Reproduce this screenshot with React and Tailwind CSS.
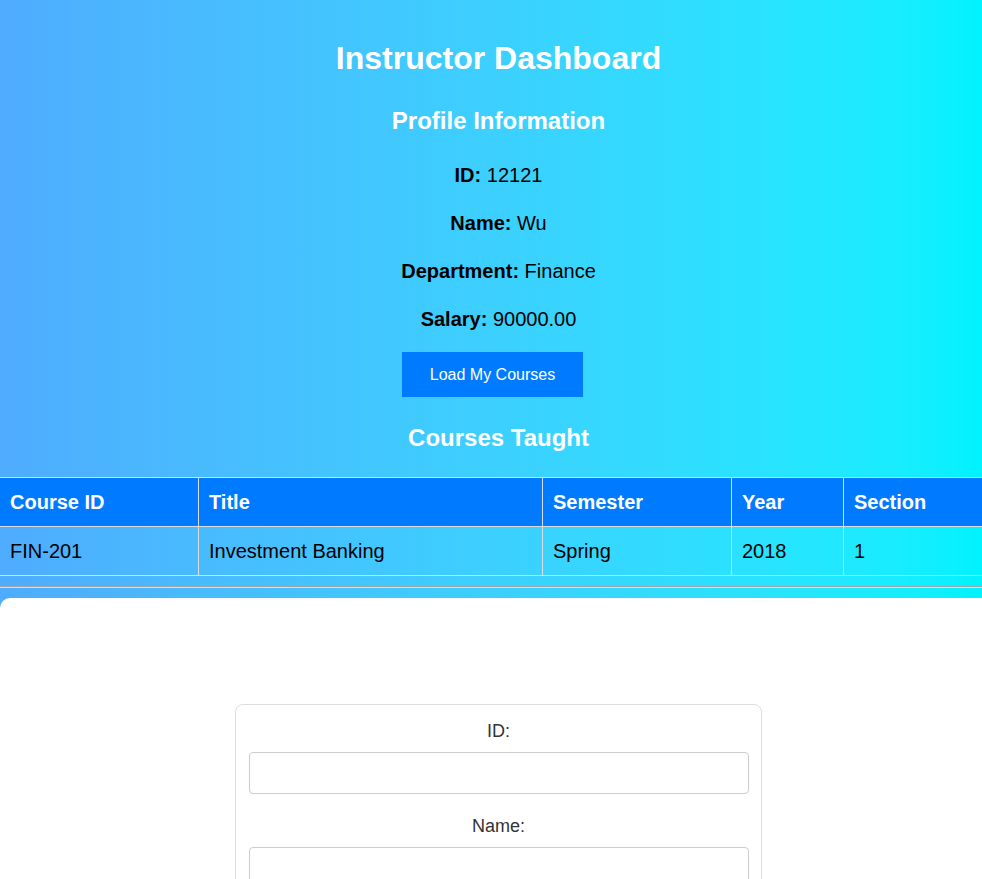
import { useState } from 'react';

const PROFILE = [
  { label: 'ID', value: '12121' },
  { label: 'Name', value: 'Wu' },
  { label: 'Department', value: 'Finance' },
  { label: 'Salary', value: '90000.00' },
];

const COLUMNS = [
  { key: 'id', label: 'Course ID', width: 'w-[199px]' },
  { key: 'title', label: 'Title', width: 'w-[344px]' },
  { key: 'semester', label: 'Semester', width: 'w-[189px]' },
  { key: 'year', label: 'Year', width: 'w-[112px]' },
  { key: 'section', label: 'Section', width: '' },
];

const COURSES = [
  { id: 'FIN-201', title: 'Investment Banking', semester: 'Spring', year: '2018', section: '1' },
];

// only the fields that fit in the window
const FIELDS = ['ID', 'Name'];

export default function App() {
  const [form, setForm] = useState({});

  return (
    <div className="h-[879px] w-full overflow-hidden bg-gradient-to-r from-[#4facfe] to-[#00f2fe] font-['Comic_Sans_MS','Liberation_Sans',sans-serif]">
      <div className="w-[997px]">
        {/* PROFILE */}
        <div className="flex flex-col items-center pt-[36px] text-center">
          <h1 className="text-[32px] leading-[44px] font-bold text-white">Instructor Dashboard</h1>
          <h2 className="mt-[24px] text-[24px] leading-[34px] font-bold text-white">Profile Information</h2>
          <div className="mt-[23px] flex flex-col gap-[20px]">
            {PROFILE.map(p => (
              <p key={p.label} className="text-[20px] leading-[28px] text-black">
                <strong>{p.label}:</strong> {p.value}
              </p>
            ))}
          </div>
          <div className="mt-[19px] flex w-full justify-center pr-[12px]">
            <button className="flex h-[45px] w-[181px] items-center justify-center bg-[#007bff] font-['Liberation_Sans',Arial,sans-serif] text-[16px] text-white">
              Load My Courses
            </button>
          </div>
          <h2 className="mt-[24px] text-[24px] leading-[34px] font-bold text-white">Courses Taught</h2>
        </div>

        {/* COURSES */}
        <table className="mt-[22px] -ml-px w-[998px] border-collapse text-left text-[20px] leading-[28px]">
          <thead>
            <tr className="bg-[#007bff] text-white">
              {COLUMNS.map(c => (
                <th key={c.key} className={`border border-[#ddd] px-[10px] py-[10px] font-bold ${c.width}`}>{c.label}</th>
              ))}
            </tr>
          </thead>
          <tbody>
            {COURSES.map(row => (
              <tr key={row.id} className="text-black">
                {COLUMNS.map(c => (
                  <td key={c.key} className="border border-[#ddd] px-[10px] py-[10px]">{row[c.key]}</td>
                ))}
              </tr>
            ))}
          </tbody>
        </table>

        <div className="mt-[10px] border-t border-b border-t-[#a3a3a3] border-b-[#dcdcdc]" />

        {/* UPDATE FORM */}
        <div className="mt-[10px] rounded-tl-[10px] bg-white pt-[106px] pb-[40px]">
          <div className="mx-auto w-[527px] rounded-lg border border-[#ddd] px-[13px] pt-[14px] pb-[20px]">
            {FIELDS.map((f, i) => (
              <div key={f} className={i > 0 ? 'mt-[20px]' : ''}>
                <label className="block text-center text-[18px] leading-[25px] text-[#333]">{f}:</label>
                <input
                  value={form[f] || ''}
                  onChange={e => setForm({ ...form, [f]: e.target.value })}
                  className="mt-[8px] block h-[42px] w-[500px] rounded border border-[#ccc] px-[10px] text-[16px] outline-none"
                />
              </div>
            ))}
          </div>
        </div>
      </div>
    </div>
  );
}
